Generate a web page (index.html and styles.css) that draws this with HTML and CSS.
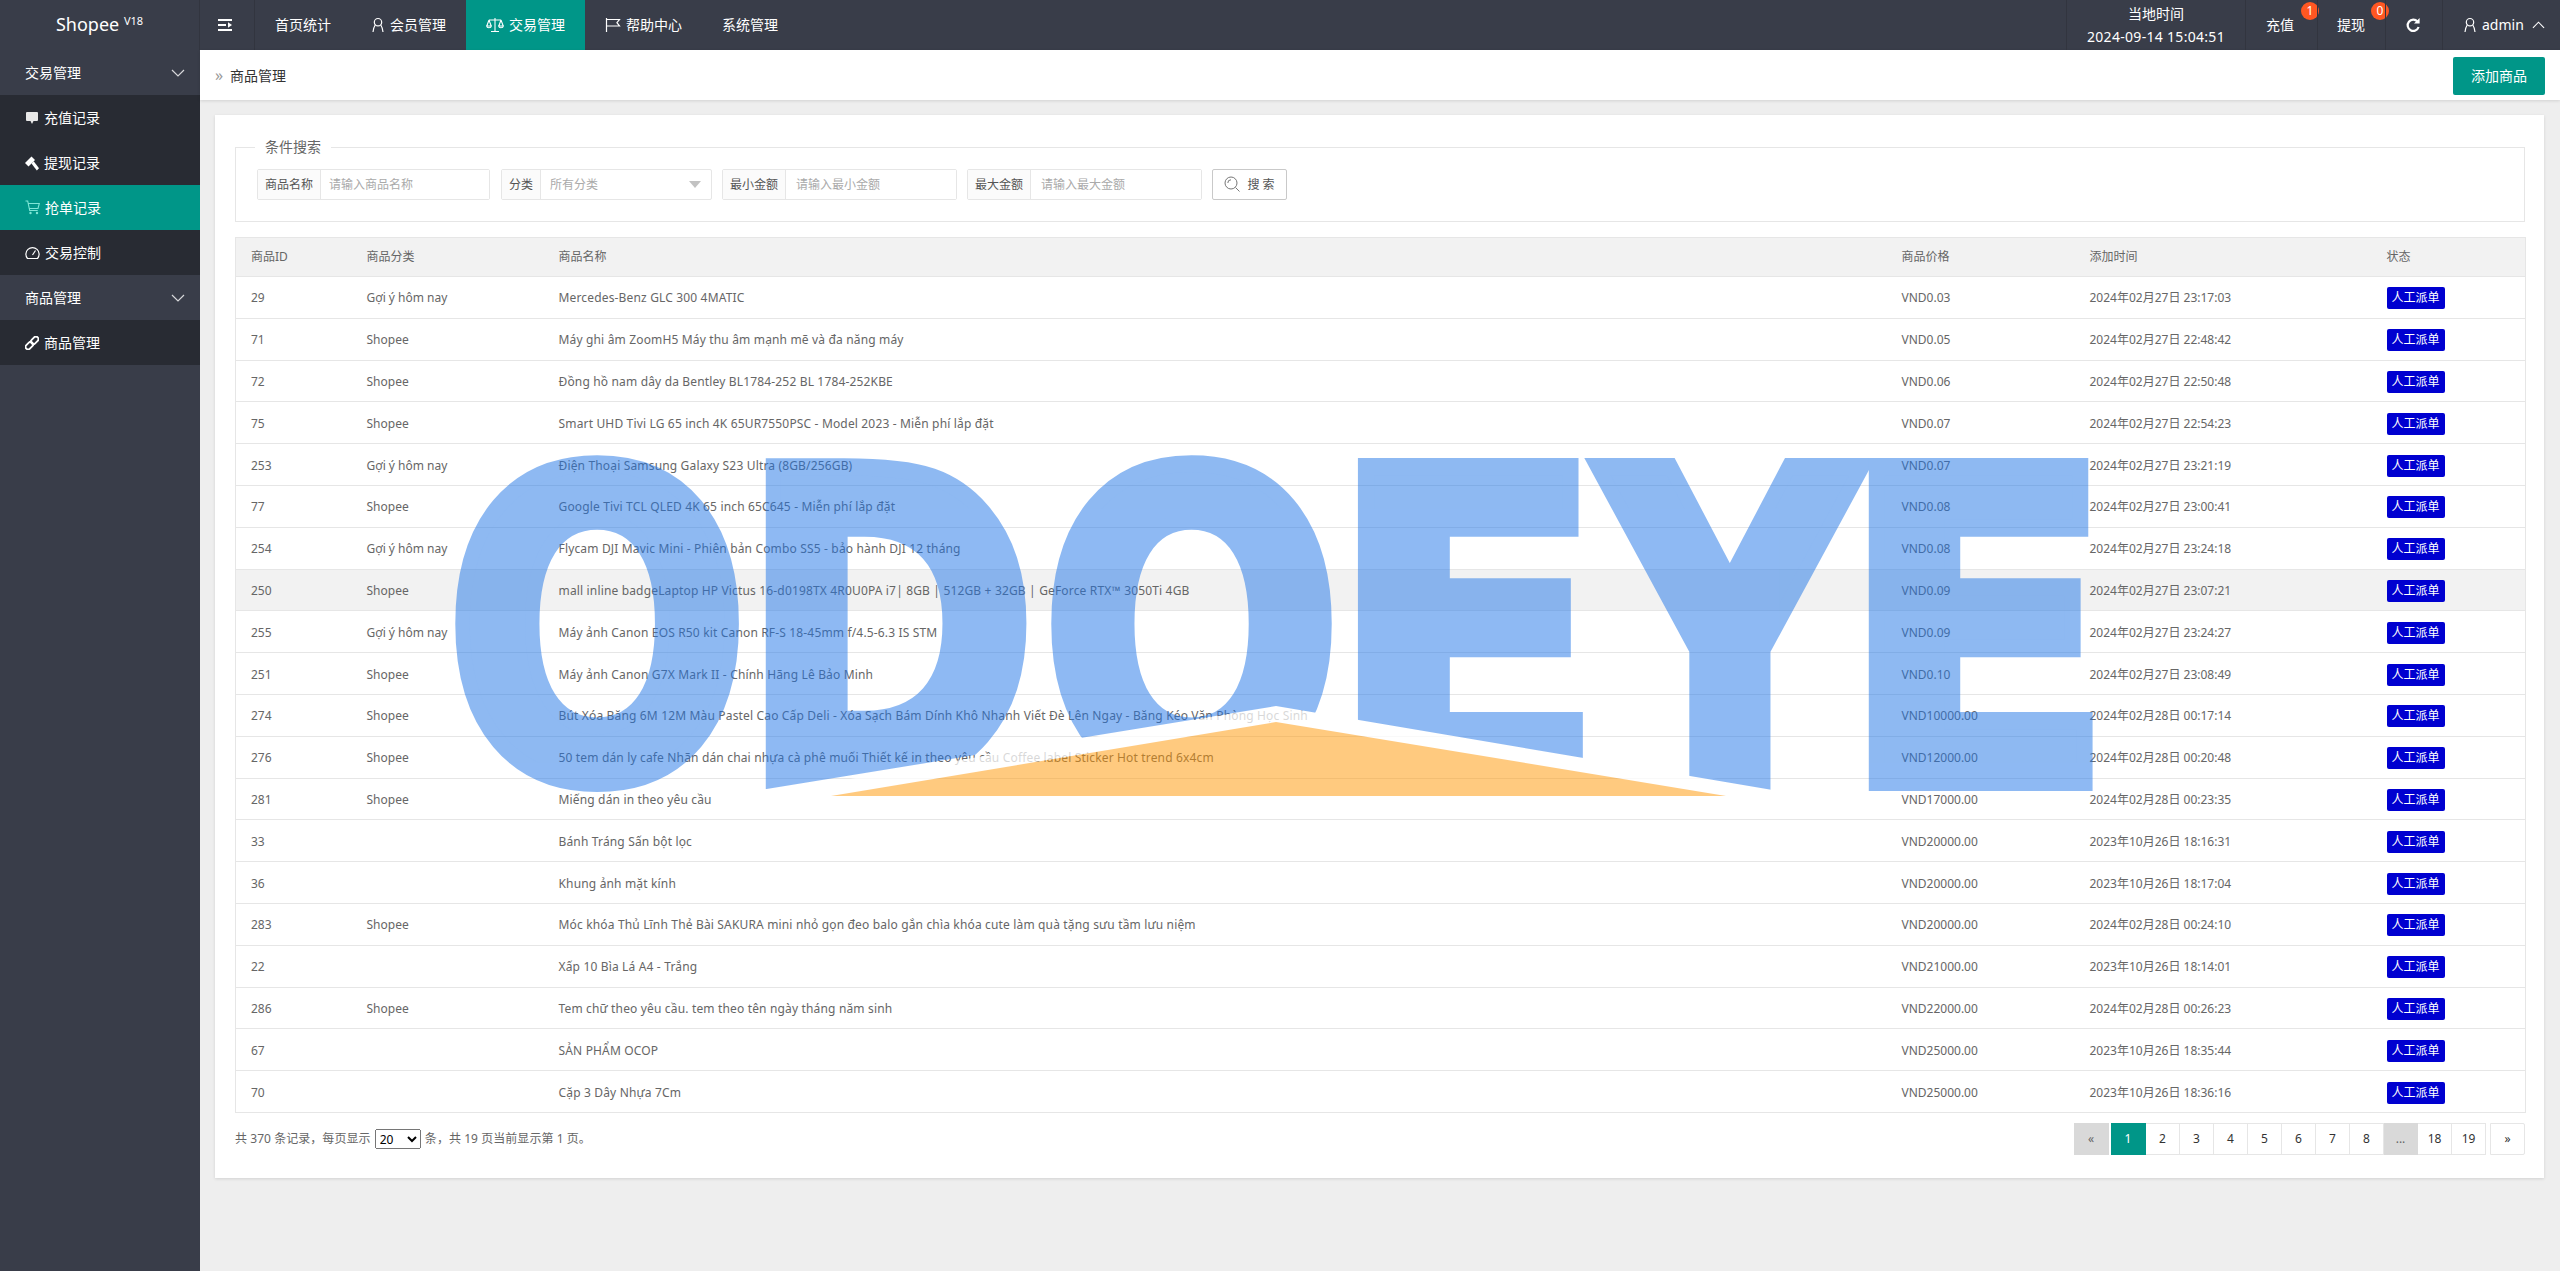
FILE: index.html
```html
<!DOCTYPE html>
<html>
<head>
<meta charset="utf-8">
<title>Shopee</title>
<link rel="stylesheet" href="styles.css">
</head>
<body>
<div class="top">
	<div class="brand">Shopee <sup>V18</sup></div>
	<div class="toggle">
		<svg class="ic" viewBox="0 0 14 12" width="14" height="12"><path d="M0 0h14v2H0zM0 5h8v2H0zM0 10h14v2H0z" fill="#fff"/><path d="M10 3.2 14 6l-4 2.8z" fill="#fff"/></svg>
	</div>
	<ul class="nav">
		<li>首页统计</li>
		<li><svg class="ic" viewBox="0 0 14 16" width="14" height="16"><circle cx="7" cy="5.2" r="3.7" fill="none" stroke="#fff" stroke-width="1.2"/><path d="M4.2 8C3 9.8 2.3 12 2 15M9.8 8c1.2 1.8 1.9 4 2.2 7" fill="none" stroke="#fff" stroke-width="1.2"/></svg>会员管理</li>
		<li class="on"><svg class="ic" viewBox="0 0 18 16" width="18" height="16"><path d="M9 1v13M5 14.5h8M3 3h12M3 3 .8 9M3 3l2.2 6M15 3l-2.2 6M15 3l2.2 6M.6 9c.4 2.4 4.4 2.4 4.8 0zM12.6 9c.4 2.4 4.4 2.4 4.8 0z" fill="none" stroke="#fff" stroke-width="1.1"/></svg>交易管理</li>
		<li><svg class="ic" viewBox="0 0 16 16" width="16" height="16"><path d="M1.5 1v14M1.5 2.5h13l-2.6 3.2 2.6 3.3h-13" fill="none" stroke="#fff" stroke-width="1.2"/></svg>帮助中心</li>
		<li>系统管理</li>
	</ul>
	<div class="tools">
		<div class="cell clock"><span>当地时间</span><span class="now">2024-09-14 15:04:51</span></div>
		<div class="cell pay">充值<i class="dot">1</i></div>
		<div class="cell draw">提现<i class="dot">0</i></div>
		<div class="cell reload">
			<svg viewBox="0 0 14 16" width="14" height="16"><path d="M11.5 4.6A5.6 5.6 0 1 0 12.6 10" fill="none" stroke="#fff" stroke-width="2.2"/><path d="M13.6 1v5.6H8z" fill="#fff"/></svg>
		</div>
		<div class="cell who">
			<svg class="ic" viewBox="0 0 14 16" width="14" height="16"><circle cx="7" cy="5.2" r="3.7" fill="none" stroke="#fff" stroke-width="1.2"/><path d="M4.2 8C3 9.8 2.3 12 2 15M9.8 8c1.2 1.8 1.9 4 2.2 7" fill="none" stroke="#fff" stroke-width="1.2"/></svg>
			admin
			<svg class="up" viewBox="0 0 14 8" width="13" height="8"><path d="M1 7l6-6 6 6" fill="none" stroke="#fff" stroke-width="1.2"/></svg>
		</div>
	</div>
</div>
<div class="wrap">
	<div class="side">
		<div class="grp">交易管理<svg class="down" viewBox="0 0 14 8" width="14" height="8"><path d="M1 1l6 6 6-6" fill="none" stroke="#fff" stroke-width="1.2"/></svg></div>
		<div class="itm"><svg class="ic" viewBox="0 0 14 14" width="14" height="14"><path d="M2 1h10a1 1 0 0 1 1 1v7a1 1 0 0 1-1 1H8.500L7 13 5.500 10H2a1 1 0 0 1-1-1V2a1 1 0 0 1 1-1z" fill="#e8e8e8"/></svg>充值记录</div>
		<div class="itm"><svg class="ic" viewBox="0 0 14 16" width="14" height="16"><path d="M0 8 6.500 1.500l3.500 3.500-6.500 6.500z" fill="#fff"/><path d="M6.500 8.500l2.200-2.200 5.300 7-2.200 2.200z" fill="#fff"/></svg>提现记录</div>
		<div class="itm on"><svg class="ic" viewBox="0 0 15 15" width="15" height="15"><path d="M.5 1h2.200l2 9.500h8M3.200 3.500H14.300l-1.300 5H4.300" fill="none" stroke="#7ee6d6" stroke-width="1.100"/><circle cx="5.500" cy="13" r="1.200" fill="#7ee6d6"/><circle cx="12" cy="13" r="1.200" fill="#7ee6d6"/></svg>抢单记录</div>
		<div class="itm"><svg class="ic" viewBox="0 0 15 14" width="15" height="14"><path d="M2.500 12.500a6.600 6.600 0 1 1 10 0zM7.500 9l3-4.500" fill="none" stroke="#fff" stroke-width="1.200"/></svg>交易控制</div>
		<div class="grp">商品管理<svg class="down" viewBox="0 0 14 8" width="14" height="8"><path d="M1 1l6 6 6-6" fill="none" stroke="#fff" stroke-width="1.200"/></svg></div>
		<div class="itm"><svg class="ic" viewBox="0 0 14 14" width="14" height="14"><g transform="rotate(-45 7 7)" fill="none" stroke="#fff" stroke-width="1.800"><rect x="-1" y="4.500" width="8.500" height="5" rx="2.500"/><rect x="6.500" y="4.500" width="8.500" height="5" rx="2.500"/></g></svg>商品管理</div>
	</div>
	<div class="main">
		<div class="crumb">
			<span class="here"><i>»</i>商品管理</span>
			<button class="add">添加商品</button>
		</div>
		<div class="card">
			<fieldset class="box">
				<legend>条件搜索</legend>
				<div class="form">
					<div class="fi w1"><label>商品名称</label><input placeholder="请输入商品名称"></div>
					<div class="fi w2"><label>分类</label><span class="sel">所有分类<i></i></span></div>
					<div class="fi w3"><label>最小金额</label><input placeholder="请输入最小金额"></div>
					<div class="fi w3"><label>最大金额</label><input placeholder="请输入最大金额"></div>
					<button class="find"><svg viewBox="0 0 17 17" width="17" height="17"><circle cx="7" cy="7" r="6" fill="none" stroke="#777" stroke-width="1"/><path d="M3.800 7A3.200 3.200 0 0 1 7 3.800M11.500 11.500l4 4" fill="none" stroke="#777" stroke-width="1"/></svg>搜 索</button>
				</div>
			</fieldset>
			<table class="list">
				<colgroup><col class="c1"><col class="c2"><col class="c3"><col class="c4"><col class="c5"><col class="c6"></colgroup>
				<thead>
					<tr><th>商品ID</th><th>商品分类</th><th>商品名称</th><th>商品价格</th><th>添加时间</th><th>状态</th></tr>
				</thead>
				<tbody>
					<tr><td>29</td><td>Gợi ý hôm nay</td><td>Mercedes-Benz GLC 300 4MATIC</td><td>VND0.03</td><td>2024年02月27日 23:17:03</td><td><span class="tag">人工派单</span></td></tr>
					<tr><td>71</td><td>Shopee</td><td>Máy ghi âm ZoomH5 Máy thu âm mạnh mẽ và đa năng máy</td><td>VND0.05</td><td>2024年02月27日 22:48:42</td><td><span class="tag">人工派单</span></td></tr>
					<tr><td>72</td><td>Shopee</td><td>Đồng hồ nam dây da Bentley BL1784-252 BL 1784-252KBE</td><td>VND0.06</td><td>2024年02月27日 22:50:48</td><td><span class="tag">人工派单</span></td></tr>
					<tr><td>75</td><td>Shopee</td><td>Smart UHD Tivi LG 65 inch 4K 65UR7550PSC - Model 2023 - Miễn phí lắp đặt</td><td>VND0.07</td><td>2024年02月27日 22:54:23</td><td><span class="tag">人工派单</span></td></tr>
					<tr><td>253</td><td>Gợi ý hôm nay</td><td>Điện Thoại Samsung Galaxy S23 Ultra (8GB/256GB)</td><td>VND0.07</td><td>2024年02月27日 23:21:19</td><td><span class="tag">人工派单</span></td></tr>
					<tr><td>77</td><td>Shopee</td><td>Google Tivi TCL QLED 4K 65 inch 65C645 - Miễn phí lắp đặt</td><td>VND0.08</td><td>2024年02月27日 23:00:41</td><td><span class="tag">人工派单</span></td></tr>
					<tr><td>254</td><td>Gợi ý hôm nay</td><td>Flycam DJI Mavic Mini - Phiên bản Combo SS5 - bảo hành DJI 12 tháng</td><td>VND0.08</td><td>2024年02月27日 23:24:18</td><td><span class="tag">人工派单</span></td></tr>
					<tr class="hov"><td>250</td><td>Shopee</td><td>mall inline badgeLaptop HP Victus 16-d0198TX 4R0U0PA i7| 8GB | 512GB + 32GB | GeForce RTX™ 3050Ti 4GB</td><td>VND0.09</td><td>2024年02月27日 23:07:21</td><td><span class="tag">人工派单</span></td></tr>
					<tr><td>255</td><td>Gợi ý hôm nay</td><td>Máy ảnh Canon EOS R50 kit Canon RF-S 18-45mm f/4.5-6.3 IS STM</td><td>VND0.09</td><td>2024年02月27日 23:24:27</td><td><span class="tag">人工派单</span></td></tr>
					<tr><td>251</td><td>Shopee</td><td>Máy ảnh Canon G7X Mark II - Chính Hãng Lê Bảo Minh</td><td>VND0.10</td><td>2024年02月27日 23:08:49</td><td><span class="tag">人工派单</span></td></tr>
					<tr><td>274</td><td>Shopee</td><td>Bút Xóa Băng 6M 12M Màu Pastel Cao Cấp Deli - Xóa Sạch Bám Dính Khô Nhanh Viết Đè Lên Ngay - Băng Kéo Văn Phòng Học Sinh</td><td>VND10000.00</td><td>2024年02月28日 00:17:14</td><td><span class="tag">人工派单</span></td></tr>
					<tr><td>276</td><td>Shopee</td><td>50 tem dán ly cafe Nhãn dán chai nhựa cà phê muối Thiết kế in theo yêu cầu Coffee label Sticker Hot trend 6x4cm</td><td>VND12000.00</td><td>2024年02月28日 00:20:48</td><td><span class="tag">人工派单</span></td></tr>
					<tr><td>281</td><td>Shopee</td><td>Miếng dán in theo yêu cầu</td><td>VND17000.00</td><td>2024年02月28日 00:23:35</td><td><span class="tag">人工派单</span></td></tr>
					<tr><td>33</td><td></td><td>Bánh Tráng Sấn bột lọc</td><td>VND20000.00</td><td>2023年10月26日 18:16:31</td><td><span class="tag">人工派单</span></td></tr>
					<tr><td>36</td><td></td><td>Khung ảnh mặt kính</td><td>VND20000.00</td><td>2023年10月26日 18:17:04</td><td><span class="tag">人工派单</span></td></tr>
					<tr><td>283</td><td>Shopee</td><td>Móc khóa Thủ Lĩnh Thẻ Bài SAKURA mini nhỏ gọn đeo balo gắn chìa khóa cute làm quà tặng sưu tầm lưu niệm</td><td>VND20000.00</td><td>2024年02月28日 00:24:10</td><td><span class="tag">人工派单</span></td></tr>
					<tr><td>22</td><td></td><td>Xấp 10 Bìa Lá A4 - Trắng</td><td>VND21000.00</td><td>2023年10月26日 18:14:01</td><td><span class="tag">人工派单</span></td></tr>
					<tr><td>286</td><td>Shopee</td><td>Tem chữ theo yêu cầu. tem theo tên ngày tháng năm sinh</td><td>VND22000.00</td><td>2024年02月28日 00:26:23</td><td><span class="tag">人工派单</span></td></tr>
					<tr><td>67</td><td></td><td>SẢN PHẨM OCOP</td><td>VND25000.00</td><td>2023年10月26日 18:35:44</td><td><span class="tag">人工派单</span></td></tr>
					<tr><td>70</td><td></td><td>Cặp 3 Dây Nhựa 7Cm</td><td>VND25000.00</td><td>2023年10月26日 18:36:16</td><td><span class="tag">人工派单</span></td></tr>
				</tbody>
			</table>
			<div class="foot">
				<div class="info">共 370 条记录，每页显示 <select><option>20</option></select> 条，共 19 页当前显示第 1 页。</div>
				<div class="pages">
					<a class="off">«</a><a class="cur">1</a><a>2</a><a>3</a><a>4</a><a>5</a><a>6</a><a>7</a><a>8</a><a class="off">...</a><a>18</a><a>19</a><a class="last">»</a>
				</div>
			</div>
		</div>
	</div>
</div>
<svg class="mark" viewBox="0 0 2560 1271" width="2560" height="1271">
	<defs>
		<clipPath id="cut"><path d="M0 0H2560V923L1276 706 0 914z"/></clipPath>
	</defs>
	<path class="band" d="M1276 706 1863 803H710zM1276 722 1726 796H831z"/>
	<g class="letters" clip-path="url(#cut)">
		<text transform="translate(444.6 777.6) scale(3.59 4.23)">O</text>
		<text transform="translate(740 780.4) scale(3.59 4.3)">D</text>
		<text transform="translate(1040.7 777.6) scale(3.55 4.23)">O</text>
		<text transform="translate(1329 782.3) scale(4.03 4.33)">E</text>
		<text transform="translate(1601 782.3) scale(3.56 4.33)">Y</text>
		<text transform="translate(1840 782.3) scale(4.01 4.33)">E</text>
	</g>
	<path class="roof" d="M1276 722 1726 796H831z"/>
</svg>
</body>
</html>
```
FILE: styles.css
```css
*{margin:0;padding:0;box-sizing:border-box;list-style:none;}
html,body{height:100%;overflow:hidden;}
body{background:#eee;font:12px/20px "Noto Sans","Noto Sans CJK SC",sans-serif;color:#666;display:flex;flex-direction:column;position:relative;}
i{font-style:normal;}
.ic{margin-right:5px;flex:none;}

/* top bar */
.top{height:50px;flex:none;background:#393D49;color:#fff;font-size:14px;display:flex;align-items:stretch;}
.brand{width:200px;text-align:center;font-size:18px;line-height:48px;border-right:1px solid #32353f;}
.brand sup{font-size:11px;line-height:0;vertical-align:6px;}
.toggle{width:55px;display:flex;align-items:center;justify-content:center;border-right:1px solid #32353f;}
.nav{display:flex;}
.nav li{padding:0 20px;display:flex;align-items:center;}
.nav li.on{background:#009688;}
.tools{margin-left:auto;display:flex;}
.cell{border-left:1px solid #32353f;display:flex;align-items:center;padding:0 20px;position:relative;}
.clock{flex-direction:column;justify-content:center;width:179px;padding:0;line-height:23px;}
.now{letter-spacing:.3px;}
.pay{width:72px;}
.draw{width:68px;padding-left:19px;}
.reload{width:57px;}
.who{width:118px;padding:0 0 0 20px;}
.up{margin-left:8px;}
.dot{position:absolute;top:2px;right:-2px;width:18px;height:18px;border-radius:50%;background:#FF5722;font-size:12px;line-height:18px;text-align:center;}
.draw .dot{right:-4px;}

/* side menu */
.wrap{flex:1;display:flex;min-height:0;}
.side{width:200px;flex:none;background:#393D49;color:#fff;font-size:14px;}
.grp,.itm{height:45px;display:flex;align-items:center;padding-left:25px;}
.grp{justify-content:space-between;padding-right:15px;}
.itm{background:#282B33;}
.itm.on{background:#009688;}
.down{opacity:.8;}

/* content */
.main{flex:1;min-width:0;}
.crumb{height:50px;background:#fff;box-shadow:0 1px 3px rgba(0,0,0,.12);display:flex;align-items:center;justify-content:space-between;padding:0 15px;font-size:14px;color:#333;}
.here i{display:inline-block;width:15px;font-size:16px;color:#999;}
.add{width:92px;height:38px;margin-top:1px;background:#009688;color:#fff;border:0;border-radius:2px;font:inherit;}
.card{margin:15px 16px 0 15px;background:#fff;padding:22px 19px 23px 20px;box-shadow:0 1px 3px rgba(0,0,0,.12);}
.box{border:1px solid #e6e6e6;padding:12px 21px 21px;}
.box legend{margin-left:-2px;padding:0 10px;font-size:14px;line-height:20px;color:#666;}
.form{display:flex;gap:10px;}
.fi{height:31px;display:flex;border:1px solid #e6e6e6;border-radius:2px;}
.fi label{background:#fbfbfb;border-right:1px solid #e6e6e6;padding:0 7px;line-height:29px;color:#555;white-space:nowrap;}
.fi input{flex:1;min-width:0;border:0;outline:0;padding:0 8px;font:inherit;}
.fi input::placeholder{color:#aaa;}
.w1{width:233px;margin-right:1px;}
.w2{width:211px;}
.w3{width:235px;}
.w3 input{padding-left:10px;}
.sel{flex:1;padding:0 9px;line-height:29px;color:#aaa;position:relative;}
.sel i{position:absolute;right:10px;top:11px;border:6px solid transparent;border-top:7px solid #c2c2c2;border-bottom:0;}
.find{width:75px;height:31px;background:#fff;border:1px solid #c9c9c9;border-radius:2px;font:inherit;color:#555;display:flex;align-items:center;justify-content:center;gap:6px;}

/* table */
.list{width:2290px;margin-top:15px;border-collapse:collapse;table-layout:fixed;}
.c1{width:116px;}
.c2{width:192px;}
.c3{width:1343px;}
.c4{width:188px;}
.c5{width:297px;}
.c6{width:154px;}
.list th,.list td{border:1px solid #e6e6e6;border-width:1px 0;padding:0 15px;text-align:left;font-weight:400;white-space:nowrap;}
.list th:first-child,.list td:first-child{border-left-width:1px;}
.list th:last-child,.list td:last-child{border-right-width:1px;}
.list th{height:39px;background:#f2f2f2;}
.list td{height:41.8px;padding-top:2px;}
.list td:nth-child(3){letter-spacing:.16px;}
.hov td{background:#f2f2f2;}
.tag{display:inline-block;height:22px;line-height:22px;padding:0 5px;background:#0000d0;color:#fff;border-radius:2px;vertical-align:middle;}

/* pager */
.foot{margin-top:10px;display:flex;justify-content:space-between;align-items:center;}
.info{letter-spacing:.05px;}
.info select{width:46px;height:20px;margin:0 1px;font:12px "Noto Sans",sans-serif;color:#000;vertical-align:middle;}
.pages{display:flex;height:32px;}
.pages a{width:34px;line-height:30px;text-align:center;border:1px solid #e6e6e6;border-left-width:0;color:#333;background:#fff;}
.pages .off{background:#d9d9d9;border-color:#d9d9d9;color:#666;}
.pages .off:first-child{width:35px;margin-right:2px;}
.pages .cur{width:35px;background:#009688;border-color:#009688;color:#fff;}
.pages .last{width:35px;margin-left:4px;border-left-width:1px;border-radius:0 2px 2px 0;}

/* watermark */
.mark{position:absolute;left:0;top:0;pointer-events:none;}
.band{fill:#fff;fill-rule:evenodd;opacity:.75;}
.roof{fill:#ff9600;opacity:.5;}
.letters{opacity:.5;font:700 100px "DejaVu Sans",sans-serif;fill:#1f75e7;stroke:#1f75e7;stroke-width:4;}
```
